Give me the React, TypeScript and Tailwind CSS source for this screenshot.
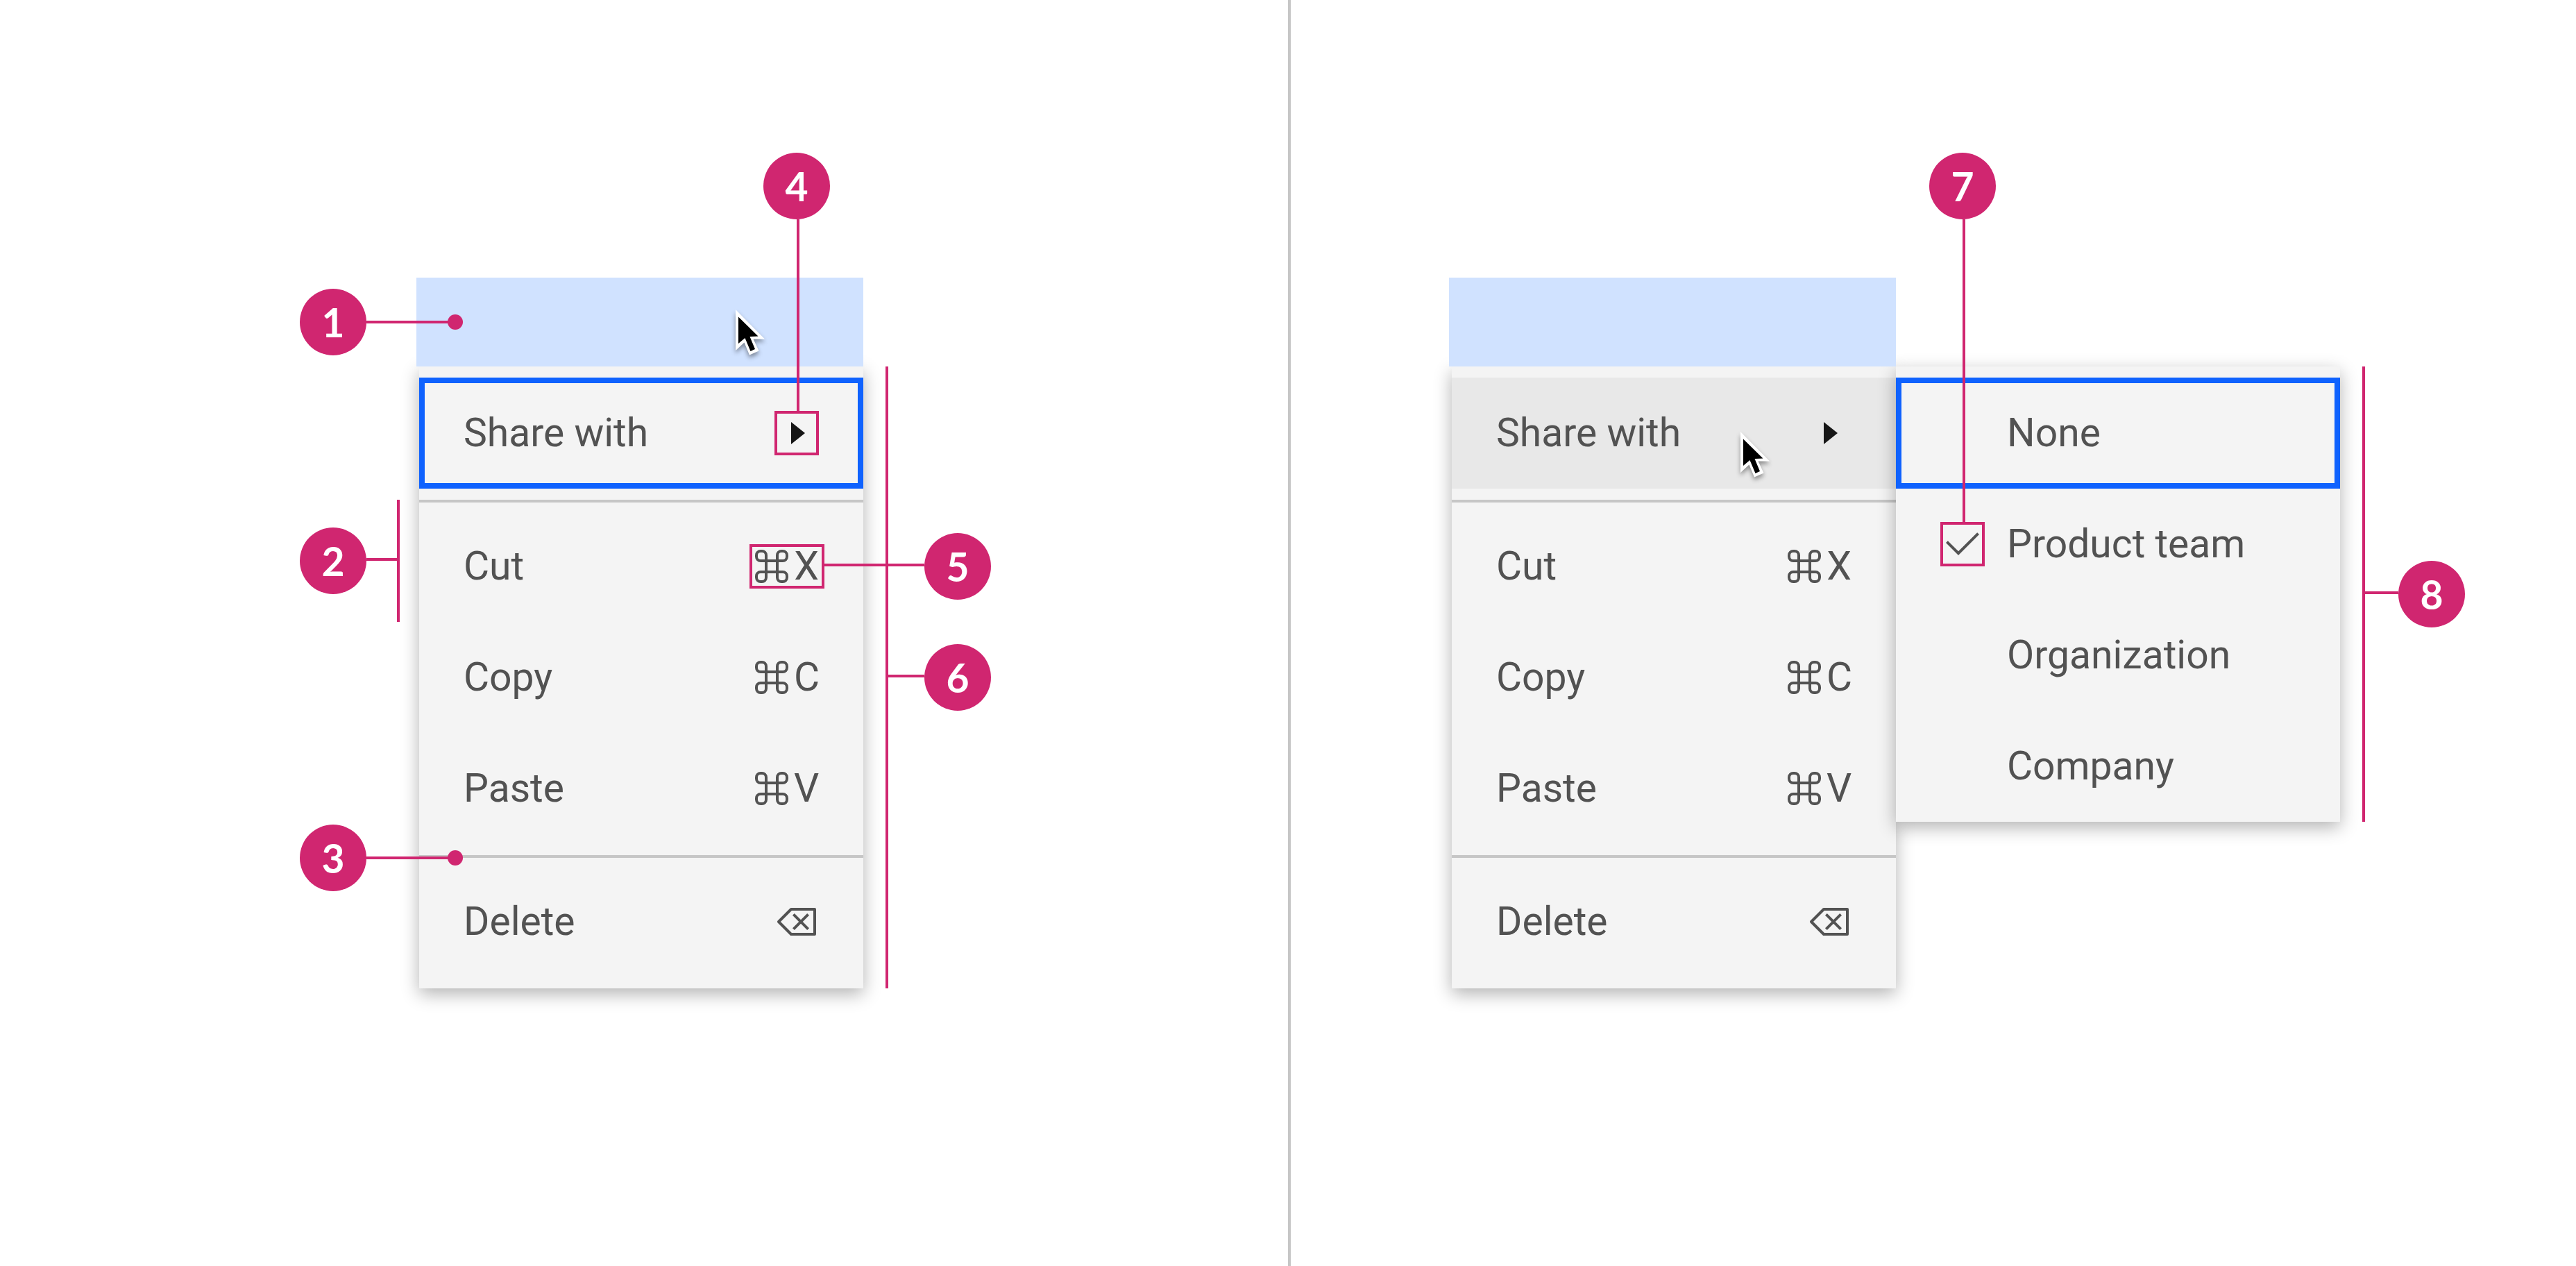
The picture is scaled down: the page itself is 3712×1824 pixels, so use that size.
import type { ReactNode } from "react";

function CommandIcon() {
  return (
    <svg viewBox="0 0 48 48" className="size-12" fill="none" stroke="currentColor" strokeWidth="4" aria-hidden="true">
      <path d="M16 16H8a6 6 0 0 1-6-6V8a6 6 0 0 1 6-6h2a6 6 0 0 1 6 6v32a6 6 0 0 1-6 6H8a6 6 0 0 1-6-6v-2a6 6 0 0 1 6-6h32a6 6 0 0 1 6 6v2a6 6 0 0 1-6 6h-2a6 6 0 0 1-6-6V8a6 6 0 0 1 6-6h2a6 6 0 0 1 6 6v2a6 6 0 0 1-6 6z" />
    </svg>
  );
}

function CaretIcon() {
  return (
    <svg viewBox="0 0 16 16" className="size-16 text-[#161616]" fill="currentColor" aria-hidden="true">
      <path d="M6 12 11 8 6 4z" />
    </svg>
  );
}

function BackspaceIcon() {
  return (
    <svg viewBox="0 0 32 32" className="size-16" fill="none" stroke="currentColor" strokeWidth="2" aria-hidden="true">
      <path strokeLinejoin="round" d="M29 7v18H12L3 16l9-9z" />
      <path d="M13.7 10.7l10.6 10.6M24.3 10.7L13.7 21.3" />
    </svg>
  );
}

function CheckIcon() {
  return (
    <svg viewBox="0 0 32 32" className="size-16" fill="currentColor" aria-hidden="true">
      <path d="M13 24 4 15l1.414-1.414L13 21.171 26.586 7.586 28 9z" />
    </svg>
  );
}

function Cursor({ place }: { place: string }) {
  return (
    <svg viewBox="0 0 48 72" className={`absolute h-18 w-12 overflow-visible drop-shadow-[0_4px_3px_rgba(0,0,0,0.4)] ${place}`} aria-hidden="true">
      <path fill="#fff" d="M0 0V59L12.5 47.5 20 65.5 33.5 59.5 25.5 42.5H42z" />
      <path fill="#000" d="M4 10.5V49L13.5 41 21.5 60 28 57 20.5 39 32.5 38.5z" />
    </svg>
  );
}

function Shortcut({ letter }: { letter: string }) {
  return (
    <span className="flex items-center gap-2">
      <CommandIcon />
      <span className="w-9 text-center">{letter}</span>
    </span>
  );
}

function MenuItem({ label, end, state = "" }: { label: string; end: ReactNode; state?: string }) {
  return (
    <button type="button" role="menuitem" className={`flex h-40 w-full items-center justify-between px-16 ${state}`}>
      <span>{label}</span>
      {end}
    </button>
  );
}

function SubmenuItem({ label, checked = false, state = "" }: { label: string; checked?: boolean; state?: string }) {
  return (
    <button type="button" role="menuitemradio" aria-checked={checked} className={`flex h-40 w-full items-center gap-8 px-16 ${state}`}>
      <span className="size-16">{checked && <CheckIcon />}</span>
      <span>{label}</span>
    </button>
  );
}

const focused = "outline-8 -outline-offset-8 outline-[#0f62fe]";
const hovered = "bg-[#e8e8e8]";

function Divider() {
  return <div role="separator" className="mt-4 mb-3 h-1 bg-[#c6c6c6]" />;
}

function ContextMenu({ shareState }: { shareState: string }) {
  return (
    <div role="menu" className="ml-1 bg-[#f4f4f4] py-4 shadow-[0_8px_24px_rgba(0,0,0,0.3)]">
      <MenuItem label="Share with" end={<CaretIcon />} state={shareState} />
      <Divider />
      <MenuItem label="Cut" end={<Shortcut letter="X" />} />
      <MenuItem label="Copy" end={<Shortcut letter="C" />} />
      <MenuItem label="Paste" end={<Shortcut letter="V" />} />
      <Divider />
      <MenuItem label="Delete" end={<BackspaceIcon />} />
    </div>
  );
}

function Target() {
  return <div className="relative z-10 h-32 bg-[#d0e2ff]" />;
}

function Badge({ n, place }: { n: number; place: string }) {
  return (
    <span className={`absolute flex size-24 items-center justify-center rounded-full bg-[#d02670] font-['Lato',sans-serif] font-bold text-white ${place}`}>
      {n}
    </span>
  );
}

function Line({ place }: { place: string }) {
  return <span className={`absolute bg-[#d02670] ${place}`} />;
}

function Dot({ place }: { place: string }) {
  return <span className={`absolute size-[22px] rounded-full bg-[#d02670] ${place}`} />;
}

function Frame({ place }: { place: string }) {
  return <span className={`absolute border-4 border-[#d02670] ${place}`} />;
}

export default function App() {
  return (
    <main className="grid min-h-screen grid-cols-2 bg-white font-['Roboto',sans-serif] text-[57px] leading-[72px] text-[#525252]">
      <section className="pt-100 pl-150">
        <div className="relative w-161">
          <Target />
          <ContextMenu shareState={focused} />

          <div className="pointer-events-none absolute inset-0 z-20">
            <Cursor place="top-[46px] left-115" />

            <Badge n={1} place="top-4 -left-42" />
            <Line place="top-[62px] -left-18 h-1 w-32" />
            <Dot place="top-[53px] left-[45px]" />

            <Badge n={2} place="top-90 -left-42" />
            <Line place="top-101 -left-18 h-1 w-11" />
            <Line place="top-80 -left-7 h-44 w-1" />

            <Badge n={3} place="top-197 -left-42" />
            <Line place="top-[834px] -left-18 h-1 w-32" />
            <Dot place="top-[825px] left-[45px]" />

            <Badge n={4} place="-top-45 left-125" />
            <Line place="-top-21 left-137 h-69 w-1" />
            <Frame place="top-48 left-129 size-16" />

            <Frame place="top-96 left-120 h-16 w-27" />
            <Line place="top-103 left-147 h-1 w-36" />
            <Badge n={5} place="top-92 left-183" />

            <Line place="top-32 left-169 h-224 w-1" />
            <Line place="top-143 left-170 h-1 w-13" />
            <Badge n={6} place="top-132 left-183" />
          </div>
        </div>
      </section>

      <section className="border-l-4 border-[#c6c6c6] pt-100 pl-57">
        <div className="relative flex w-321 items-start">
          <div className="w-161">
            <Target />
            <ContextMenu shareState={hovered} />
          </div>
          <div role="menu" className="relative mt-32 w-160 bg-[#f4f4f4] pt-4 shadow-[0_8px_24px_rgba(0,0,0,0.3)]">
            <SubmenuItem label="None" state={focused} />
            <SubmenuItem label="Product team" checked />
            <SubmenuItem label="Organization" />
            <SubmenuItem label="Company" />
          </div>

          <div className="pointer-events-none absolute inset-0 z-20">
            <Cursor place="top-[222px] left-105" />

            <Badge n={7} place="-top-45 left-173" />
            <Line place="-top-21 left-185 h-109 w-1" />
            <Frame place="top-88 left-177 size-16" />

            <Line place="top-32 left-329 h-164 w-1" />
            <Line place="top-113 left-330 h-1 w-12" />
            <Badge n={8} place="top-102 left-342" />
          </div>
        </div>
      </section>
    </main>
  );
}
